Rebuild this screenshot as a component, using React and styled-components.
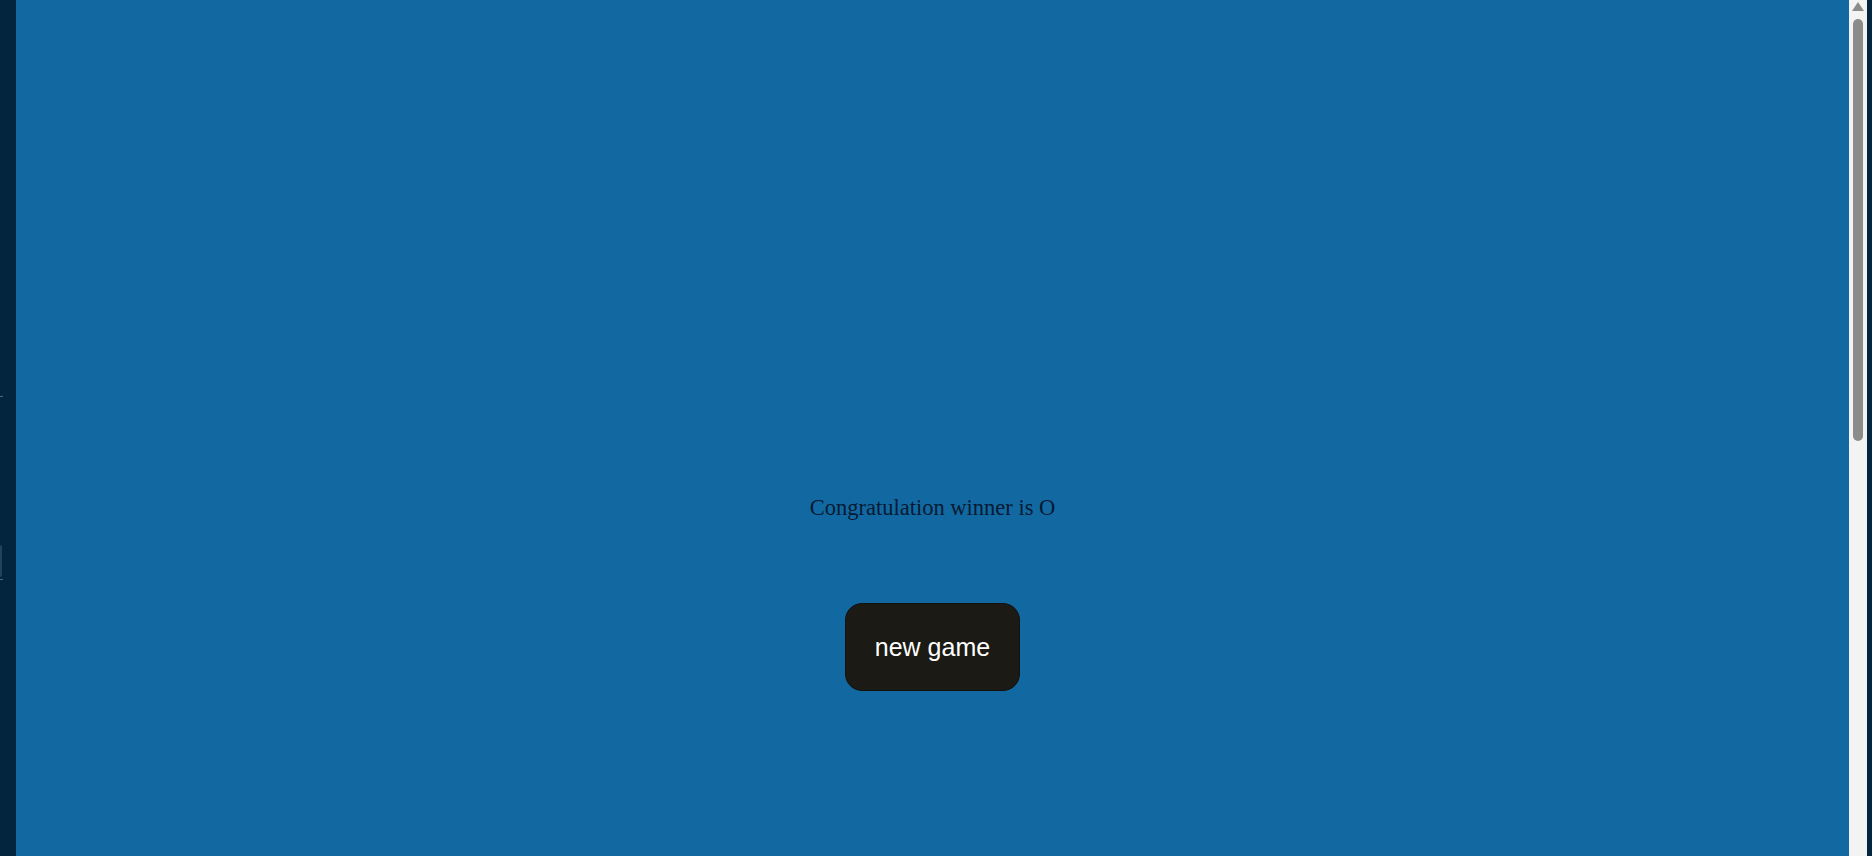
import React from 'react';
import styled, { createGlobalStyle } from 'styled-components';

const GlobalStyle = createGlobalStyle`
  html, body {
    margin: 0;
    padding: 0;
    height: 100%;
    overflow: hidden;
    background: #04253e;
  }
  #root {
    height: 100%;
  }
`;

const Shell = styled.div`
  display: flex;
  height: 856px;
  background: #04253e;
`;

const SideStrip = styled.div`
  width: 16px;
  flex-shrink: 0;
  background: #04253e;
  display: flex;
  flex-direction: column;
  padding-top: 396px;
  box-sizing: border-box;

  .tick {
    width: 3px;
    height: 1px;
    background: #4d6a82;
  }

  .tab {
    margin-top: 148px;
    width: 2px;
    height: 32px;
    border-radius: 0 3px 3px 0;
    background: #23435c;
  }

  .tick.low {
    margin-top: 2px;
  }
`;

const Board = styled.main`
  flex: 1;
  background: #1269a2;
  display: flex;
  flex-direction: column;
  align-items: center;
  padding-top: 495px;
  box-sizing: border-box;
`;

const Message = styled.p`
  margin: 0;
  font-family: "Liberation Serif", "Times New Roman", serif;
  font-size: 22.5px;
  line-height: 25px;
  color: #061a33;
`;

const NewGameButton = styled.button`
  margin-top: 83px;
  width: 175px;
  height: 88px;
  border: 1px solid #13120e;
  border-radius: 17px;
  background: #1b1a14;
  color: #ffffff;
  font-family: "Liberation Sans", Arial, sans-serif;
  font-size: 25px;
  cursor: pointer;
`;

const ScrollTrack = styled.div`
  width: 18px;
  flex-shrink: 0;
  background: #f3f3f3;
  display: flex;
  flex-direction: column;
  align-items: center;
  padding-top: 2px;
  box-sizing: border-box;
`;

const ScrollThumb = styled.div`
  margin-top: 8px;
  width: 10px;
  height: 422px;
  border-radius: 5px;
  background: #8b8b8b;
`;

const Edge = styled.div`
  width: 5px;
  flex-shrink: 0;
  background: #04253e;
`;

export default function App() {
  return (
    <>
      <GlobalStyle />
      <Shell>
        <SideStrip>
          <div className="tick" />
          <div className="tab" />
          <div className="tick low" />
        </SideStrip>
        <Board>
          <Message>Congratulation winner is O</Message>
          <NewGameButton>new game</NewGameButton>
        </Board>
        <ScrollTrack>
          <svg width="12" height="9" viewBox="0 0 12 9">
            <path d="M6 0 L12 9 L0 9 Z" fill="#8b8b8b" />
          </svg>
          <ScrollThumb />
        </ScrollTrack>
        <Edge />
      </Shell>
    </>
  );
}
